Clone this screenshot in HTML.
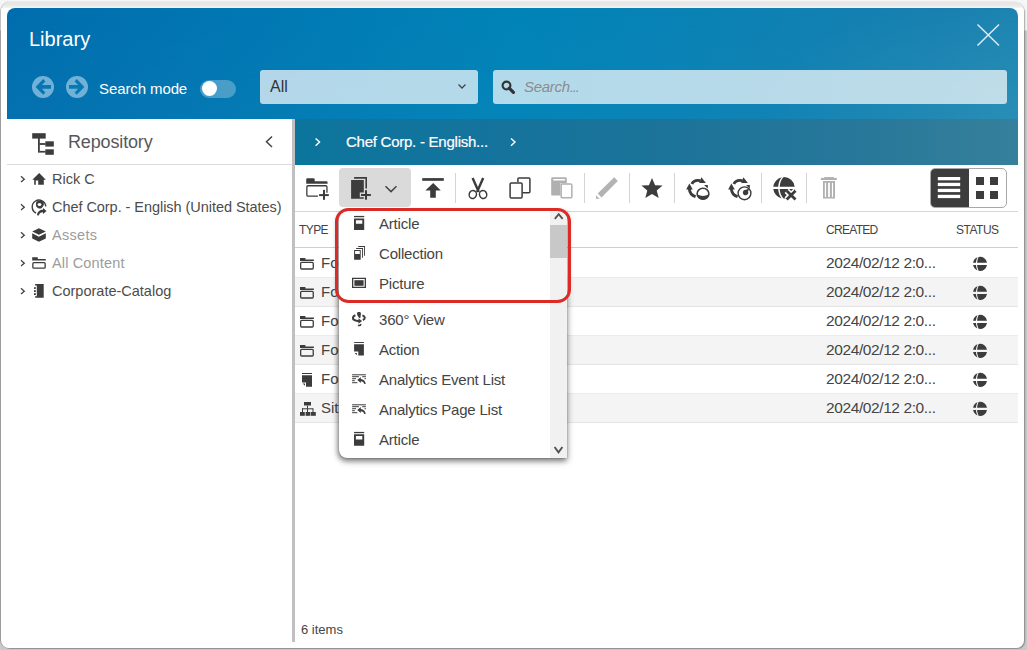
<!DOCTYPE html>
<html><head><meta charset="utf-8">
<style>
*{box-sizing:border-box;margin:0;padding:0}
html,body{width:1027px;height:650px;overflow:hidden;background:#fff;font-family:"Liberation Sans",sans-serif}
.a{position:absolute}
.t{position:absolute;white-space:nowrap;font-family:"Liberation Sans",sans-serif}
svg{position:absolute;overflow:visible}
</style></head><body>
<!-- frame -->
<div class="a" style="left:0;top:0;width:1027px;height:650px;background:linear-gradient(#f6f6f6 0,#f6f6f6 30px,#c9c9c9 31px)"></div>
<div class="a" style="left:1px;top:1px;width:1023px;height:647px;border-radius:11px 11px 8px 8px;background:linear-gradient(#ececec 0,#e5e5e5 2px,#ebebeb 5px,#f2f2f2 6.5px,#fff 7px,#fff 100%);box-shadow:-1px 0 0 0 rgba(0,0,0,0.22),1px 1px 0 0 rgba(0,0,0,0.2),2px 1px 1px 0 rgba(0,0,0,0.08)"></div>
<!-- header -->
<div class="a" style="left:7px;top:8px;width:1011px;height:111px;border-radius:8px 8px 0 0;background:linear-gradient(to right,#006dae 0%,#0084b8 50%,#1880b0 92%,#1c84b1 100%)"></div>
<div class="a" style="left:7px;top:8px;width:1011px;height:111px;border-radius:8px 8px 0 0;background:radial-gradient(ellipse 260px 120px at 100% 100%,rgba(70,165,190,0.3),rgba(70,165,190,0) 100%),linear-gradient(to bottom,rgba(30,140,190,0) 0%,rgba(30,140,190,0.14) 100%)"></div>

<div class="t" style="left:29px;top:29px;font-size:20px;line-height:20px;color:#fff">Library</div>

<!-- back / fwd -->
<svg style="left:32px;top:76px" width="22" height="22" viewBox="0 0 22 22"><circle cx="11" cy="11" r="11" fill="#72b1d7"/><path d="M3.6 10.9 L11.2 3.1 L13.4 5.4 L9.9 9 H19 V12.8 H9.9 L13.4 16.4 L11.2 18.7Z" fill="#0876b2"/></svg>
<svg style="left:66px;top:76px" width="22" height="22" viewBox="0 0 22 22"><circle cx="11" cy="11" r="11" fill="#72b1d7"/><path d="M18.4 10.9 L10.8 3.1 L8.6 5.4 L12.1 9 H3 V12.8 H12.1 L8.6 16.4 L10.8 18.7Z" fill="#0979b3"/></svg>

<div class="t" style="left:99px;top:81px;font-size:15px;line-height:15px;color:#fff;letter-spacing:-0.1px">Search mode</div>
<div class="a" style="left:200px;top:80px;width:36px;height:18px;border-radius:9px;background:rgba(255,255,255,0.28)"></div>
<div class="a" style="left:202px;top:81px;width:15px;height:15px;border-radius:50%;background:#fff"></div>

<!-- type select -->
<div class="a" style="left:260px;top:70px;width:218px;height:34px;border-radius:3px;background:rgba(255,255,255,0.7)"></div>
<div class="t" style="left:270px;top:79px;font-size:16px;line-height:16px;color:#333">All</div>
<svg style="left:458px;top:84px" width="8" height="5" viewBox="0 0 8 5"><path d="M0.5 0.5 L4 4 L7.5 0.5" fill="none" stroke="#444" stroke-width="1.3"/></svg>

<!-- search -->
<div class="a" style="left:493px;top:70px;width:514px;height:34px;border-radius:3px;background:rgba(255,255,255,0.7)"></div>
<svg style="left:501px;top:80px" width="14" height="14" viewBox="0 0 14 14"><circle cx="5.5" cy="5.5" r="3.9" fill="none" stroke="#333" stroke-width="2.1"/><path d="M8.2 8.2 L12.4 12.4" stroke="#333" stroke-width="3.2" stroke-linecap="round"/></svg>
<div class="t" style="left:524px;top:79px;font-size:15px;line-height:15px;color:#8c8c8c;font-style:italic;letter-spacing:-0.3px">Search<span style="letter-spacing:-1.2px">...</span></div>

<!-- close X -->
<svg style="left:977px;top:24px" width="23" height="22" viewBox="0 0 23 22"><path d="M0.5 0.5 L22 21.5 M22 0.5 L0.5 21.5" stroke="#dcecf4" stroke-width="1.5"/></svg>

<!-- left pane -->
<div class="a" style="left:7px;top:164px;width:285px;height:1px;background:#dcdcdc"></div>
<div class="a" style="left:292px;top:119px;width:3px;height:523px;background:#c0c0c0"></div>


<!-- left pane header -->
<svg style="left:0;top:0" width="60" height="160" viewBox="0 0 60 160"><g fill="#3c3c3c">
<rect x="32.2" y="133.2" width="13.5" height="5.4"/>
<rect x="38" y="138" width="1.8" height="14.6"/>
<rect x="39.5" y="143.1" width="6" height="1.8"/>
<rect x="39.5" y="150.9" width="6" height="1.7"/>
<rect x="45.3" y="141.3" width="8.5" height="5.3"/>
<rect x="45.3" y="149.3" width="8.5" height="5.5"/>
</g></svg>
<div class="t" style="left:68px;top:132.7px;font-size:18px;line-height:18px;color:#585858;letter-spacing:-0.15px">Repository</div>
<svg style="left:0;top:0" width="300" height="160" viewBox="0 0 300 160"><path d="M272 136.5 L266.5 141.8 L272 147" fill="none" stroke="#444" stroke-width="1.5"/></svg>

<!-- tree -->
<svg style="left:0;top:0" width="60" height="310" viewBox="0 0 60 310">
<g fill="none" stroke="#444" stroke-width="1.3">
<path d="M21 176.3 L24.3 179.2 L21 182.1"/>
<path d="M21 204.3 L24.3 207.2 L21 210.1"/>
<path d="M21 232.3 L24.3 235.2 L21 238.1"/>
<path d="M21 260.3 L24.3 263.2 L21 266.1"/>
<path d="M21 288.3 L24.3 291.2 L21 294.1"/>
</g>
<g fill="#3c3c3c">
<path d="M39.2 173.1 L45.8 179.7 L43.8 179.7 L43.8 184.8 L38.2 184.8 L38.2 180.5 L35.8 180.5 L35.8 184.8 L34.2 184.8 L34.2 179.7 L32.3 179.7Z"/>
<rect x="32.2" y="231.6" width="0" height="0"/>
<path d="M32.2 231.5 L38.9 228.2 L45.8 231.5 L38.9 234.7Z"/>
<path d="M32.2 233.3 L38.9 236.7 L45.8 233.3 L45.8 238.6 L38.9 241.8 L32.2 238.6Z"/>
<path d="M32.2 257.2 H37.8 V259.1 H45.8 V260.6 H32.2Z"/>
<path d="M36.8 284.1 H43.7 V297.8 H35.1 V296.3 H36.8 V285.6 H35.1 V284.1Z"/>
<rect x="34" y="287.2" width="1.8" height="1.7"/><rect x="34" y="290.2" width="1.8" height="1.8"/><rect x="34" y="293.2" width="1.8" height="1.8"/>
</g>
<rect x="32.85" y="262.65" width="12.3" height="5.5" rx="1" fill="none" stroke="#3c3c3c" stroke-width="1.3"/>
<path d="M36 213 A6.8 6.8 0 1 1 45.8 206.4" fill="none" stroke="#3c3c3c" stroke-width="1.4"/>
<g fill="#3c3c3c">
<path d="M36.6 201.6 C38.5 200.4 41.5 200.4 43.3 202.2 C44.2 203.2 44 205 43.2 206 C42.5 207.5 41.5 208.6 40 208.6 C38.6 208.6 37 207.8 36.3 206.5 C35.8 205 35.8 202.6 36.6 201.6Z"/>
<path d="M37 215.2 C37.3 211.8 39.8 209.8 43 209.8 L43 208 L46.6 211 L43 214 L43 212.2 C40.8 212.2 39.4 213.2 38.8 215.6Z"/>
</g>
<ellipse cx="39.5" cy="204.6" rx="1.9" ry="1.5" fill="#fff"/>
</svg>
<div class="t" style="left:52px;top:171.5px;font-size:14.5px;line-height:14.5px;color:#4c4c4c;letter-spacing:0">Rick C</div>
<div class="t" style="left:52px;top:199.5px;font-size:14.5px;line-height:14.5px;color:#4c4c4c;letter-spacing:-0.05px">Chef Corp. - English (United States)</div>
<div class="t" style="left:52px;top:227.5px;font-size:14.5px;line-height:14.5px;color:#9c9c9c;letter-spacing:0.3px">Assets</div>
<div class="t" style="left:52px;top:255.5px;font-size:14.5px;line-height:14.5px;color:#9c9c9c;letter-spacing:0.15px">All Content</div>
<div class="t" style="left:52px;top:283.5px;font-size:14.5px;line-height:14.5px;color:#4c4c4c;letter-spacing:0">Corporate-Catalog</div>

<!-- right: breadcrumb -->
<div class="a" style="left:295px;top:119px;width:723px;height:46px;background:linear-gradient(to right,#0c759c 0%,#18739c 37%,#1b7399 49%,#27779a 77%,#35809b 100%)"></div>
<div class="t" style="left:346px;top:134px;font-size:15px;line-height:15px;color:#fff;letter-spacing:-0.25px;-webkit-text-stroke:0.2px #fff">Chef Corp. - English...</div>

<svg style="left:0;top:0" width="530" height="160" viewBox="0 0 530 160"><g fill="none" stroke="#fff" stroke-width="1.4"><path d="M315.6 138.4 L319.6 142.1 L315.6 145.8"/><path d="M511 138.4 L515 142.1 L511 145.8"/></g></svg>

<!-- toolbar -->
<div class="a" style="left:295px;top:211px;width:723px;height:1px;background:#d6d6d6"></div>
<div class="a" style="left:339px;top:168px;width:72px;height:39px;border-radius:4px;background:#dadada"></div>
<svg style="left:0;top:0" width="1027" height="212" viewBox="0 0 1027 212">
<g fill="#d4d4d4"><rect x="455" y="173" width="1" height="30"/><rect x="584" y="173" width="1" height="30"/><rect x="629" y="173" width="1" height="30"/><rect x="674" y="173" width="1" height="30"/><rect x="761" y="173" width="1" height="30"/><rect x="806" y="173" width="1" height="30"/></g>
<!-- new folder -->
<g fill="#3c3c3c">
<path d="M306.2 183.8 V179.4 Q306.2 178.2 307.4 178.2 H313.5 Q314.7 178.2 314.7 179.4 V181.2 H326.4 Q327.6 181.2 327.6 182.4 V183.8Z"/>
<rect x="319.1" y="194.1" width="9.7" height="2"/><rect x="323" y="189.9" width="2" height="9.9"/>
</g>
<path d="M317.9 196.2 H308 Q306.85 196.2 306.85 195 V186.9 Q306.85 185.75 308 185.75 H325.8 Q326.95 185.75 326.95 186.9 V192.7" fill="none" stroke="#3c3c3c" stroke-width="1.3"/>
<!-- new doc -->
<g fill="#3c3c3c">
<path d="M354.1 177.1 H367 V188.6 H365.4 V178.7 H354.1Z"/>
<path d="M351.1 180.1 H363.8 V192.5 H359.8 V197.2 H363.8 V198.8 H351.1Z"/>
<rect x="361" y="194" width="9.9" height="2"/><rect x="365" y="190.2" width="2" height="9.5"/>
</g>
<path d="M385.5 186.3 L391 191.6 L396.5 186.3" fill="none" stroke="#444" stroke-width="1.5"/>
<!-- upload -->
<g fill="#3c3c3c">
<rect x="422.2" y="178.1" width="21.6" height="2.7"/>
<path d="M433.2 183.1 L440.8 190.5 H435.8 V197.7 H430.2 V190.5 H425.4Z"/>
</g>
<!-- scissors -->
<g fill="none" stroke="#3c3c3c">
<path d="M472.6 178 L478.8 192 M483.2 178 L477 192" stroke-width="2.4"/>
<ellipse cx="472.8" cy="194.5" rx="3.6" ry="4" stroke-width="1.5" transform="rotate(20 472.8 194.5)"/>
<ellipse cx="483.1" cy="194.5" rx="3.6" ry="4" stroke-width="1.5" transform="rotate(-20 483.1 194.5)"/>
</g>
<!-- copy -->
<g fill="none" stroke="#3c3c3c" stroke-width="1.5">
<path d="M517.9 181.9 V178.9 Q517.9 177.9 518.9 177.9 H528.9 Q529.9 177.9 529.9 178.9 V191.8 Q529.9 192.8 528.9 192.8 H522.3"/>
<rect x="510.1" y="182.9" width="12" height="15" rx="1.2"/>
</g>
<!-- paste -->
<g>
<path d="M552.4 177.2 H565.6 Q566.8 177.2 566.8 178.4 V183.2 H560.4 V195.6 H552.4 Q551.2 195.6 551.2 194.4 V178.4 Q551.2 177.2 552.4 177.2Z M553.2 179 V180.6 H565 V179Z" fill="#b0b0b0" fill-rule="evenodd"/>
<rect x="561.15" y="183.95" width="10.7" height="13.9" rx="1.2" fill="#fff" stroke="#b0b0b0" stroke-width="1.5"/>
</g>
<!-- pencil -->
<g fill="#b3b3b3">
<path d="M614.2 177.2 L617.8 181.1 L601.5 197.4 L597.7 193.6Z"/>
<path d="M596 195.2 V198.8 H599.8Z"/>
</g>
<!-- star -->
<path d="M652 178.1 L655.1 185.3 L662.6 185.6 L656.7 190.5 L658.7 198.1 L652 193.9 L645.3 198.1 L647.3 190.5 L641.4 185.6 L648.9 185.3Z" fill="#3c3c3c"/>
<!-- sync 1 -->
<g transform="translate(0,0)">
<path d="M691.9 184 C693.2 180.9 696.5 179.9 700.4 180.6" fill="none" stroke="#3c3c3c" stroke-width="2.9"/>
<path d="M701.4 177.3 L705.9 182.9 L699.2 183Z" fill="#3c3c3c"/>
<path d="M689.3 188.6 C689.6 192.4 692 195.6 695.6 196.7" fill="none" stroke="#3c3c3c" stroke-width="2.9"/>
<path d="M689.4 183.4 L692.8 189.6 L686.1 189.6Z" fill="#3c3c3c"/>
<path d="M704.1 185.1 L707.9 185.1 L707.7 188.5Z" fill="#3c3c3c"/>
</g>
<ellipse cx="703" cy="193.8" rx="5.9" ry="5.5" fill="none" stroke="#3c3c3c" stroke-width="1.6"/>
<path d="M697.1 194.2 Q703 197.8 708.9 194.2 A5.9 5.5 0 0 1 697.1 194.2Z" fill="#3c3c3c"/>
<!-- sync 2 -->
<g transform="translate(42,0)">
<path d="M691.9 184 C693.2 180.9 696.5 179.9 700.4 180.6" fill="none" stroke="#3c3c3c" stroke-width="2.9"/>
<path d="M701.4 177.3 L705.9 182.9 L699.2 183Z" fill="#3c3c3c"/>
<path d="M689.3 188.6 C689.6 192.4 692 195.6 695.6 196.7" fill="none" stroke="#3c3c3c" stroke-width="2.9"/>
<path d="M689.4 183.4 L692.8 189.6 L686.1 189.6Z" fill="#3c3c3c"/>
<path d="M704.1 185.1 L707.9 185.1 L707.7 188.5Z" fill="#3c3c3c"/>
</g>
<circle cx="744.5" cy="193.3" r="6.4" fill="none" stroke="#3c3c3c" stroke-width="1.4"/>
<path d="M743 193.4 A2.7 2.7 0 1 0 748.1 191.6 L749.2 188.6 L746 189.8 A2.7 2.7 0 0 0 743 193.4Z" fill="#3c3c3c"/>
<!-- globe x -->
<g fill="#3c3c3c">
<path d="M783.6 177.1 A10.7 10.7 0 0 1 794.7 186.8 H779.7 C779.9 183 781.2 179.6 783.6 177.1Z"/>
<path d="M781.8 177.3 C779.6 179.8 778.4 183 778.2 186.8 H773.3 A10.7 10.7 0 0 1 781.8 177.3Z"/>
<path d="M773.3 188.9 H778.2 C778.4 192.6 779.6 195.8 781.8 198.4 A10.7 10.7 0 0 1 773.3 188.9Z"/>
<path d="M779.7 188.9 H794.7 A10.7 10.7 0 0 1 783.6 198.6 C781.2 196 779.9 192.7 779.7 188.9Z"/>
</g>
<path d="M786.7 190.8 L795.5 199.5 M795.5 190.8 L786.7 199.5" stroke="#fff" stroke-width="6"/>
<path d="M786.7 190.8 L795.5 199.5 M795.5 190.8 L786.7 199.5" stroke="#3c3c3c" stroke-width="2.8"/>
<!-- trash -->
<g fill="#b0b0b0">
<rect x="824.2" y="177.1" width="9.6" height="1.5"/>
<rect x="820.9" y="177.9" width="15.9" height="2.1"/>
<path d="M823 181.1 H835 V198.6 H823Z M824.8 182.7 V197 H826.1 V182.7Z M828.1 182.7 V197 H829.9 V182.7Z M831.9 182.7 V197 H833.1 V182.7Z" fill-rule="evenodd"/>
</g>
</svg>
<!-- view toggle -->
<div class="a" style="left:929.5px;top:168.3px;width:77.5px;height:39.3px;border:1px solid #a8a8a8;border-radius:5px;background:#fff;overflow:hidden">
 <div class="a" style="left:0;top:0;width:38px;height:100%;background:#3d3d3d"></div>
</div>
<svg style="left:0;top:0" width="1027" height="212" viewBox="0 0 1027 212">
<g fill="#fff"><rect x="937.8" y="177" width="22.4" height="3.3"/><rect x="937.8" y="182.8" width="22.4" height="3.3"/><rect x="937.8" y="188.8" width="22.4" height="3.3"/><rect x="937.8" y="194.8" width="22.4" height="3.3"/></g>
<g fill="#3c3c3c"><rect x="976" y="177" width="8" height="8"/><rect x="990" y="177" width="8" height="8"/><rect x="976" y="191" width="8" height="8"/><rect x="990" y="191" width="8" height="8"/></g>
</svg>

<!-- table -->
<div class="t" style="left:299px;top:224px;font-size:12px;line-height:12px;color:#444;letter-spacing:-0.6px">TYPE</div>
<div class="t" style="left:826px;top:224px;font-size:12px;line-height:12px;color:#444;letter-spacing:-0.7px">CREATED</div>
<div class="t" style="left:956px;top:224px;font-size:12px;line-height:12px;color:#444;letter-spacing:-0.5px">STATUS</div>
<div class="a" style="left:295px;top:247px;width:723px;height:1px;background:#cfcfcf"></div>
<div class="a" style="left:295px;top:248px;width:723px;height:30px;background:#fff;border-bottom:1px solid #ebebeb"></div>
<div class="a" style="left:295px;top:278px;width:723px;height:29px;background:#f4f4f4;border-bottom:1px solid #e4e4e4"></div>
<div class="a" style="left:295px;top:307px;width:723px;height:29px;background:#fff;border-bottom:1px solid #ebebeb"></div>
<div class="a" style="left:295px;top:336px;width:723px;height:29px;background:#f4f4f4;border-bottom:1px solid #e4e4e4"></div>
<div class="a" style="left:295px;top:365px;width:723px;height:29px;background:#fff;border-bottom:1px solid #ebebeb"></div>
<div class="a" style="left:295px;top:394px;width:723px;height:29px;background:#f4f4f4;border-bottom:1px solid #e4e4e4"></div>
<div class="t" style="left:826px;top:254.6px;font-size:15.5px;line-height:15.5px;color:#444;letter-spacing:-0.4px">2024/02/12 2:0...</div>
<div class="t" style="left:321px;top:255px;font-size:15px;line-height:15px;color:#444">Folder</div>
<div class="t" style="left:826px;top:283.6px;font-size:15.5px;line-height:15.5px;color:#444;letter-spacing:-0.4px">2024/02/12 2:0...</div>
<div class="t" style="left:321px;top:284px;font-size:15px;line-height:15px;color:#444">Folder</div>
<div class="t" style="left:826px;top:312.6px;font-size:15.5px;line-height:15.5px;color:#444;letter-spacing:-0.4px">2024/02/12 2:0...</div>
<div class="t" style="left:321px;top:313px;font-size:15px;line-height:15px;color:#444">Folder</div>
<div class="t" style="left:826px;top:341.6px;font-size:15.5px;line-height:15.5px;color:#444;letter-spacing:-0.4px">2024/02/12 2:0...</div>
<div class="t" style="left:321px;top:342px;font-size:15px;line-height:15px;color:#444">Folder</div>
<div class="t" style="left:826px;top:370.6px;font-size:15.5px;line-height:15.5px;color:#444;letter-spacing:-0.4px">2024/02/12 2:0...</div>
<div class="t" style="left:321px;top:371px;font-size:15px;line-height:15px;color:#444">Folder</div>
<div class="t" style="left:826px;top:399.6px;font-size:15.5px;line-height:15.5px;color:#444;letter-spacing:-0.4px">2024/02/12 2:0...</div>
<div class="t" style="left:321px;top:400px;font-size:15px;line-height:15px;color:#444">Sitemap</div>
<svg style="left:0;top:0" width="1027" height="430" viewBox="0 0 1027 430"><g transform="translate(0,0)"><path d="M300 257.9 H305.4 V259.4 H313.9 V261.1 H300Z" fill="#3c3c3c"/><rect x="300.65" y="262.4" width="12.6" height="6.6" rx="1" fill="none" stroke="#3c3c3c" stroke-width="1.3"/></g><g transform="translate(980,263.9)" fill="#3c3c3c"><path d="M-1.3 -6.88 A7 7 0 0 1 7 -1.15 H-2.9 C-2.8 -3.3 -2.2 -5.3 -1.3 -6.88Z"/><path d="M-2.4 -6.55 C-3.3 -5 -3.9 -3.2 -4 -1.15 H-6.9 A7 7 0 0 1 -2.4 -6.55Z"/><path d="M-1.3 6.88 A7 7 0 0 0 7 1.15 H-2.9 C-2.8 3.3 -2.2 5.3 -1.3 6.88Z"/><path d="M-2.4 6.55 C-3.3 5 -3.9 3.2 -4 1.15 H-6.9 A7 7 0 0 0 -2.4 6.55Z"/></g><g transform="translate(0,29)"><path d="M300 257.9 H305.4 V259.4 H313.9 V261.1 H300Z" fill="#3c3c3c"/><rect x="300.65" y="262.4" width="12.6" height="6.6" rx="1" fill="none" stroke="#3c3c3c" stroke-width="1.3"/></g><g transform="translate(980,292.9)" fill="#3c3c3c"><path d="M-1.3 -6.88 A7 7 0 0 1 7 -1.15 H-2.9 C-2.8 -3.3 -2.2 -5.3 -1.3 -6.88Z"/><path d="M-2.4 -6.55 C-3.3 -5 -3.9 -3.2 -4 -1.15 H-6.9 A7 7 0 0 1 -2.4 -6.55Z"/><path d="M-1.3 6.88 A7 7 0 0 0 7 1.15 H-2.9 C-2.8 3.3 -2.2 5.3 -1.3 6.88Z"/><path d="M-2.4 6.55 C-3.3 5 -3.9 3.2 -4 1.15 H-6.9 A7 7 0 0 0 -2.4 6.55Z"/></g><g transform="translate(0,58)"><path d="M300 257.9 H305.4 V259.4 H313.9 V261.1 H300Z" fill="#3c3c3c"/><rect x="300.65" y="262.4" width="12.6" height="6.6" rx="1" fill="none" stroke="#3c3c3c" stroke-width="1.3"/></g><g transform="translate(980,321.9)" fill="#3c3c3c"><path d="M-1.3 -6.88 A7 7 0 0 1 7 -1.15 H-2.9 C-2.8 -3.3 -2.2 -5.3 -1.3 -6.88Z"/><path d="M-2.4 -6.55 C-3.3 -5 -3.9 -3.2 -4 -1.15 H-6.9 A7 7 0 0 1 -2.4 -6.55Z"/><path d="M-1.3 6.88 A7 7 0 0 0 7 1.15 H-2.9 C-2.8 3.3 -2.2 5.3 -1.3 6.88Z"/><path d="M-2.4 6.55 C-3.3 5 -3.9 3.2 -4 1.15 H-6.9 A7 7 0 0 0 -2.4 6.55Z"/></g><g transform="translate(0,87)"><path d="M300 257.9 H305.4 V259.4 H313.9 V261.1 H300Z" fill="#3c3c3c"/><rect x="300.65" y="262.4" width="12.6" height="6.6" rx="1" fill="none" stroke="#3c3c3c" stroke-width="1.3"/></g><g transform="translate(980,350.9)" fill="#3c3c3c"><path d="M-1.3 -6.88 A7 7 0 0 1 7 -1.15 H-2.9 C-2.8 -3.3 -2.2 -5.3 -1.3 -6.88Z"/><path d="M-2.4 -6.55 C-3.3 -5 -3.9 -3.2 -4 -1.15 H-6.9 A7 7 0 0 1 -2.4 -6.55Z"/><path d="M-1.3 6.88 A7 7 0 0 0 7 1.15 H-2.9 C-2.8 3.3 -2.2 5.3 -1.3 6.88Z"/><path d="M-2.4 6.55 C-3.3 5 -3.9 3.2 -4 1.15 H-6.9 A7 7 0 0 0 -2.4 6.55Z"/></g><g fill="#3c3c3c"><rect x="302" y="373" width="10" height="1"/><path d="M302 375.2 H312 V386.8 H306 V382.5 H302Z"/><path d="M302.6 383.5 L305 383.5 L305 385.8Z"/></g><g transform="translate(980,379.9)" fill="#3c3c3c"><path d="M-1.3 -6.88 A7 7 0 0 1 7 -1.15 H-2.9 C-2.8 -3.3 -2.2 -5.3 -1.3 -6.88Z"/><path d="M-2.4 -6.55 C-3.3 -5 -3.9 -3.2 -4 -1.15 H-6.9 A7 7 0 0 1 -2.4 -6.55Z"/><path d="M-1.3 6.88 A7 7 0 0 0 7 1.15 H-2.9 C-2.8 3.3 -2.2 5.3 -1.3 6.88Z"/><path d="M-2.4 6.55 C-3.3 5 -3.9 3.2 -4 1.15 H-6.9 A7 7 0 0 0 -2.4 6.55Z"/></g><g fill="#3c3c3c"><rect x="304" y="402" width="7" height="3.5"/><rect x="307" y="405.5" width="1" height="3"/><rect x="302" y="408.3" width="11" height="1"/><rect x="302" y="408.3" width="1" height="3.7"/><rect x="307" y="408.3" width="1" height="3.7"/><rect x="312.5" y="408.3" width="1" height="3.7"/><rect x="300" y="412" width="4.8" height="3.8"/><rect x="305.6" y="412" width="4.8" height="3.8"/><rect x="311" y="412" width="4.8" height="3.8"/></g><g transform="translate(980,408.9)" fill="#3c3c3c"><path d="M-1.3 -6.88 A7 7 0 0 1 7 -1.15 H-2.9 C-2.8 -3.3 -2.2 -5.3 -1.3 -6.88Z"/><path d="M-2.4 -6.55 C-3.3 -5 -3.9 -3.2 -4 -1.15 H-6.9 A7 7 0 0 1 -2.4 -6.55Z"/><path d="M-1.3 6.88 A7 7 0 0 0 7 1.15 H-2.9 C-2.8 3.3 -2.2 5.3 -1.3 6.88Z"/><path d="M-2.4 6.55 C-3.3 5 -3.9 3.2 -4 1.15 H-6.9 A7 7 0 0 0 -2.4 6.55Z"/></g></svg><div class="t" style="left:301px;top:623px;font-size:13px;line-height:13px;color:#444">6 items</div>

<!-- popup -->
<div class="a" style="left:339px;top:211px;width:228px;height:247px;background:#fff;border-radius:8px 0 0 8px;box-shadow:0 0 1px rgba(0,0,0,0.5),-1px 2px 5px rgba(0,0,0,0.3),0 3px 7px rgba(0,0,0,0.4)"></div>
<div class="a" style="left:550px;top:211px;width:17px;height:247px;background:#f1f1f1"></div>
<div class="a" style="left:550px;top:225px;width:17px;height:33px;background:#c8c8c8"></div>
<svg style="left:0;top:0" width="1027" height="470" viewBox="0 0 1027 470">
<g fill="none" stroke="#505050" stroke-width="1.8"><path d="M554.8 218.8 L558.7 214.2 L562.6 218.8"/><path d="M554.6 447 L558.5 452.4 L562.4 447"/></g>
<g fill="#3c3c3c">
<!-- article -->
<rect x="354" y="215.9" width="10.2" height="1.3"/>
<path d="M354 218.4 H364.2 V230 H354Z M355.9 220.2 V223.7 H362.3 V220.2Z" fill-rule="evenodd"/>
<!-- collection -->
<path d="M354.1 249.9 H360.7 V259.7 H354.1Z M355.1 250.9 V254.1 H359.8 V250.9Z" fill-rule="evenodd"/>
<path d="M356.1 248.1 H363 V257.7 H362.1 V249 H356.1Z"/>
<path d="M358.2 246.1 H365 V255.8 H364.1 V247 H358.2Z"/>
<!-- picture -->
<path d="M352 277.8 H366 V288 H352Z M353.3 279.1 V286.7 H364.7 V279.1Z" fill-rule="evenodd"/>
<rect x="354.4" y="280.2" width="9.2" height="5.6"/>
<!-- 360 -->
<path d="M357 313.2 C357 311.5 360.9 311.5 360.9 313.2 C360.9 314.5 360.6 316.4 360.3 317.9 L359.2 317.9 C357.9 316.5 357 314.8 357 313.2Z"/>
<path d="M358.5 318.2 L362 320.9 L358.5 323.7Z"/>
</g>
<g fill="none" stroke="#3c3c3c" stroke-width="2">
<path d="M355.4 315.3 C352.4 316.3 352 318.8 354.6 320.2 C355.9 320.9 357.3 321.1 359 321.2"/>
<path d="M362.4 315.4 C365.4 316.4 365.7 318.9 362.8 320"/>
<path d="M358 325.2 C359.2 325.7 360.5 325.2 361 324.1" stroke-width="1.6"/>
</g>
<g fill="#3c3c3c">
<!-- action -->
<rect x="354.1" y="342" width="9.8" height="0.95"/>
<path d="M354.1 344.2 H363.9 V355.6 H358.3 V351.4 H354.1Z"/>
<path d="M354.6 353 L356.8 353 L356.8 355.3Z"/>
<!-- analytics lists -->
<g id="al">
<rect x="352.1" y="374.3" width="13.8" height="1"/>
<rect x="352.1" y="376.2" width="6.8" height="1"/><rect x="362.2" y="376.2" width="3.7" height="1"/>
<rect x="352.1" y="378.2" width="3.9" height="1"/><rect x="364.5" y="378.2" width="1.4" height="1"/>
<rect x="352.1" y="380.2" width="2.7" height="1"/>
<rect x="352.1" y="382.2" width="5.3" height="1"/>
<path d="M357.3 380 L360.8 377 L360.8 378.9 C363.5 379 365.5 381 365.7 384 L364.3 384 C363.8 382.2 362.5 381.3 360.8 381.2 L360.8 383.1Z"/>
</g>
<use href="#al" y="30"/>
<!-- article 2 -->
<rect x="354" y="431.9" width="10.2" height="1.3"/>
<path d="M354 434.2 H364.2 V445.8 H354Z M355.9 436 V439.5 H362.3 V436Z" fill-rule="evenodd"/>
</g>
</svg>
<div class="t" style="left:379px;top:216px;font-size:15px;line-height:15px;color:#444;letter-spacing:-0.2px">Article</div>
<div class="t" style="left:379px;top:246px;font-size:15px;line-height:15px;color:#444;letter-spacing:-0.2px">Collection</div>
<div class="t" style="left:379px;top:276px;font-size:15px;line-height:15px;color:#444;letter-spacing:-0.2px">Picture</div>
<div class="t" style="left:379px;top:312px;font-size:15px;line-height:15px;color:#444;letter-spacing:-0.2px">360° View</div>
<div class="t" style="left:379px;top:342px;font-size:15px;line-height:15px;color:#444;letter-spacing:-0.2px">Action</div>
<div class="t" style="left:379px;top:372px;font-size:15px;line-height:15px;color:#444;letter-spacing:-0.2px">Analytics Event List</div>
<div class="t" style="left:379px;top:402px;font-size:15px;line-height:15px;color:#444;letter-spacing:-0.2px">Analytics Page List</div>
<div class="t" style="left:379px;top:432px;font-size:15px;line-height:15px;color:#444;letter-spacing:-0.2px">Article</div>
<!-- red highlight -->
<div class="a" style="left:335px;top:208px;width:235.5px;height:95px;border:3px solid #dc2b27;border-radius:13.5px"></div>

</body></html>
